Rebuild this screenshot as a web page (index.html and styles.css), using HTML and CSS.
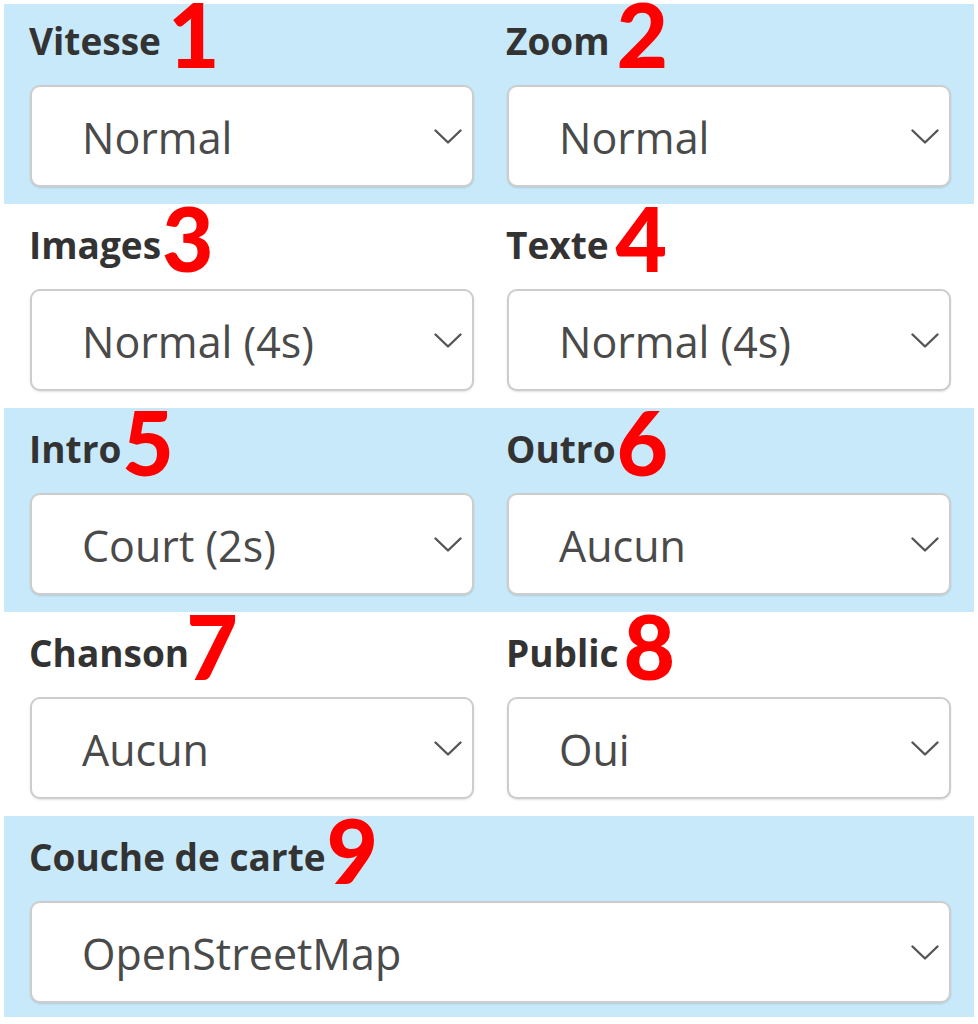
FILE: index.html
```html
<!DOCTYPE html>
<html lang="fr">
<head>
<meta charset="utf-8">
<title>Options</title>
<link rel="stylesheet" href="styles.css">
</head>
<body>
<div class="panel">
  <section class="band band-blue band-first">
    <div class="field">
      <div class="label">Vitesse<span class="num sp">1</span></div>
      <div class="select"><span class="value">Normal</span><svg class="chev" viewBox="0 0 28 15" width="28" height="15"><polyline points="1.5,1.5 14,13.5 26.5,1.5"/></svg></div>
    </div>
    <div class="field">
      <div class="label">Zoom<span class="num sp">2</span></div>
      <div class="select"><span class="value">Normal</span><svg class="chev" viewBox="0 0 28 15" width="28" height="15"><polyline points="1.5,1.5 14,13.5 26.5,1.5"/></svg></div>
    </div>
  </section>
  <section class="band">
    <div class="field">
      <div class="label">Images<span class="num">3</span></div>
      <div class="select"><span class="value">Normal (4s)</span><svg class="chev" viewBox="0 0 28 15" width="28" height="15"><polyline points="1.5,1.5 14,13.5 26.5,1.5"/></svg></div>
    </div>
    <div class="field">
      <div class="label">Texte<span class="num sp">4</span></div>
      <div class="select"><span class="value">Normal (4s)</span><svg class="chev" viewBox="0 0 28 15" width="28" height="15"><polyline points="1.5,1.5 14,13.5 26.5,1.5"/></svg></div>
    </div>
  </section>
  <section class="band band-blue">
    <div class="field">
      <div class="label">Intro<span class="num">5</span></div>
      <div class="select"><span class="value">Court (2s)</span><svg class="chev" viewBox="0 0 28 15" width="28" height="15"><polyline points="1.5,1.5 14,13.5 26.5,1.5"/></svg></div>
    </div>
    <div class="field">
      <div class="label">Outro<span class="num">6</span></div>
      <div class="select"><span class="value">Aucun</span><svg class="chev" viewBox="0 0 28 15" width="28" height="15"><polyline points="1.5,1.5 14,13.5 26.5,1.5"/></svg></div>
    </div>
  </section>
  <section class="band">
    <div class="field">
      <div class="label">Chanson<span class="num tight">7</span></div>
      <div class="select"><span class="value">Aucun</span><svg class="chev" viewBox="0 0 28 15" width="28" height="15"><polyline points="1.5,1.5 14,13.5 26.5,1.5"/></svg></div>
    </div>
    <div class="field">
      <div class="label">Public<span class="num mid">8</span></div>
      <div class="select"><span class="value">Oui</span><svg class="chev" viewBox="0 0 28 15" width="28" height="15"><polyline points="1.5,1.5 14,13.5 26.5,1.5"/></svg></div>
    </div>
  </section>
  <section class="band band-blue band-single">
    <div class="field">
      <div class="label">Couche de carte<span class="num">9</span></div>
      <div class="select"><span class="value">OpenStreetMap</span><svg class="chev" viewBox="0 0 28 15" width="28" height="15"><polyline points="1.5,1.5 14,13.5 26.5,1.5"/></svg></div>
    </div>
  </section>
</div>
</body>
</html>
```

FILE: styles.css
```css
html, body {
  margin: 0;
  padding: 0;
  background: #ffffff;
}

body {
  padding: 0 4px;
  font-family: "Open Sans", "Noto Sans", "Liberation Sans", sans-serif;
}

.panel {
  display: flex;
  flex-direction: column;
}

.band {
  box-sizing: border-box;
  height: 204px;
  padding: 16px 23px 17px 26px;
  display: grid;
  grid-template-columns: 1fr 1fr;
  column-gap: 33px;
  background: #ffffff;
}

.band-blue {
  background: #c8e9f9;
}

.band-first {
  border-top: 4px solid #ffffff;
  padding-top: 12px;
}

.band-single {
  grid-template-columns: 1fr;
  height: 201px;
}

.field {
  display: flex;
  flex-direction: column;
  min-width: 0;
}

.label {
  font-size: 37px;
  line-height: 50px;
  height: 50px;
  font-weight: 700;
  color: #333333;
  white-space: nowrap;
  margin-left: -1px;
}

.num {
  font-family: "Lato", "DejaVu Sans", sans-serif;
  font-weight: 900;
  font-size: 89px;
  line-height: 0;
  color: #ff0000;
  vertical-align: -13px;
  margin-left: 1px;
}

.num.sp {
  margin-left: 7px;
}

.num.mid {
  margin-left: 5px;
}

.num.tight {
  margin-left: -3px;
}

.select {
  box-sizing: border-box;
  margin-top: 19px;
  height: 102px;
  background: #ffffff;
  border: 2px solid #cdcdcd;
  border-radius: 10px;
  box-shadow: 0 1px 2px rgba(0, 0, 0, 0.12);
  display: flex;
  align-items: center;
  justify-content: space-between;
  padding: 3px 10px 0 50px;
}

.value {
  font-size: 43px;
  line-height: 58px;
  color: #4a4a4a;
  white-space: nowrap;
}

.chev {
  display: block;
  margin-top: -3px;
  flex: none;
}

.chev polyline {
  fill: none;
  stroke: #555555;
  stroke-width: 2.4;
  stroke-linecap: round;
  stroke-linejoin: round;
}
```
